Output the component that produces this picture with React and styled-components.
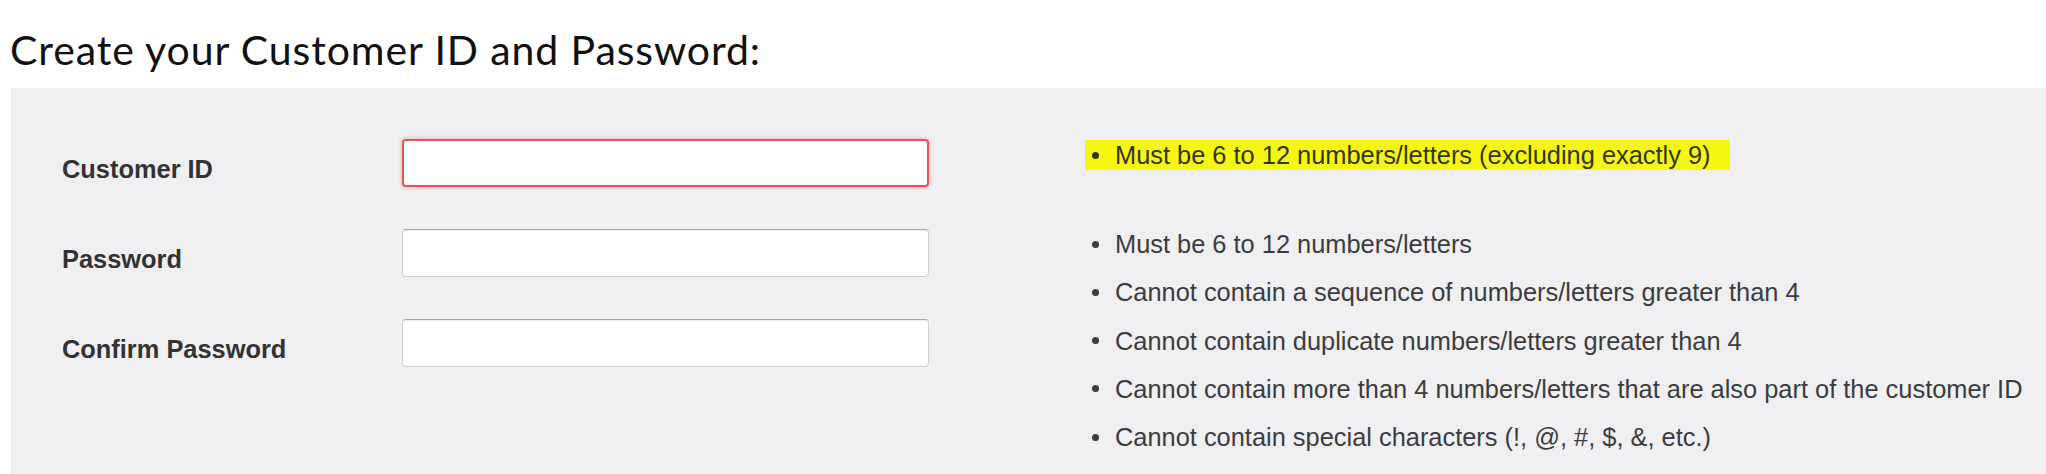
import React from 'react'
import styled, { createGlobalStyle } from 'styled-components'

const GlobalStyle = createGlobalStyle`
  html, body {
    margin: 0;
    padding: 0;
    background: #ffffff;
    overflow: hidden;
  }
`

const Page = styled.div`
  display: flex;
  flex-direction: column;
`

const Heading = styled.h1`
  margin: 29px 0 18px 10px;
  font-family: Lato, "Open Sans", sans-serif;
  font-weight: 400;
  font-size: 41px;
  line-height: 41px;
  letter-spacing: 0.9px;
  color: #111111;
`

const Panel = styled.div`
  display: flex;
  flex-direction: row;
  align-items: flex-start;
  margin-left: 11px;
  min-height: calc(100vh - 88px);
  background-color: #f0f0f2;
  padding: 51px 0 0 51px;
  box-sizing: border-box;
`

const Form = styled.div`
  display: grid;
  grid-template-columns: 340px 527px;
  grid-auto-rows: 48px;
  row-gap: 42px;
`

const Label = styled.label`
  margin-top: 18px;
  font-family: "Liberation Sans", Arial, sans-serif;
  font-weight: 700;
  font-size: 25.4px;
  line-height: 25px;
  color: #333333;
`

const Input = styled.input`
  box-sizing: border-box;
  width: 100%;
  height: 48px;
  margin: 0;
  background: #ffffff;
  border: ${p => (p.$error ? '2px solid #e0575b' : '1px solid #cfcfd2')};
  border-top-color: ${p => (p.$error ? '#e0575b' : '#a9a9ac')};
  border-radius: 4px;
  box-shadow: ${p => (p.$error
    ? '0 0 4px rgba(224, 87, 91, 0.55)'
    : 'inset 0 1px 1px rgba(0, 0, 0, 0.08)')};
  outline: none;
`

const Rules = styled.div`
  display: flex;
  flex-direction: column;
  align-items: flex-start;
  margin-left: 156px;
  margin-top: 1px;
  font-family: "Liberation Sans", Arial, sans-serif;
  font-size: 25.4px;
  color: #3c3c3e;
`

const RuleList = styled.ul`
  list-style: none;
  margin: 0;
  padding: 0;
`

const Rule = styled.li`
  display: flex;
  align-items: center;
  padding-left: 7px;
  line-height: ${p => (p.$marked ? '30px' : '48.25px')};
  background-color: ${p => (p.$marked ? '#f6f612' : 'transparent')};
  padding-right: ${p => (p.$marked ? '19px' : '0')};
  margin-bottom: ${p => (p.$marked ? '50px' : '0')};
  color: ${p => (p.$marked ? '#34361a' : 'inherit')};

  &::before {
    content: '';
    width: 7px;
    height: 7px;
    border-radius: 50%;
    background-color: currentColor;
    margin-right: 16px;
    flex-shrink: 0;
  }
`

const fields = [
  { label: 'Customer ID', type: 'text', error: true },
  { label: 'Password', type: 'password' },
  { label: 'Confirm Password', type: 'password' },
]

const passwordRules = [
  'Must be 6 to 12 numbers/letters',
  'Cannot contain a sequence of numbers/letters greater than 4',
  'Cannot contain duplicate numbers/letters greater than 4',
  'Cannot contain more than 4 numbers/letters that are also part of the customer ID',
  'Cannot contain special characters (!, @, #, $, &, etc.)',
]

const App = () => (
  <Page>
    <GlobalStyle />
    <Heading>Create your Customer ID and Password:</Heading>
    <Panel>
      <Form>
        {fields.map(f => (
          <React.Fragment key={f.label}>
            <Label>{f.label}</Label>
            <Input type={f.type} $error={f.error} />
          </React.Fragment>
        ))}
      </Form>
      <Rules>
        <RuleList>
          <Rule $marked>Must be 6 to 12 numbers/letters (excluding exactly 9)</Rule>
        </RuleList>
        <RuleList>
          {passwordRules.map(r => (
            <Rule key={r}>{r}</Rule>
          ))}
        </RuleList>
      </Rules>
    </Panel>
  </Page>
)

export default App
